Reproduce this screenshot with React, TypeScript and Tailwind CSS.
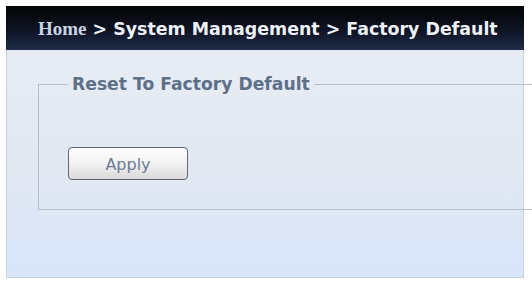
export default function App() {
  return (
    <div className="w-[532px] h-[284px] overflow-hidden bg-white pt-[6px] pl-[6px]">
      <div className="flex h-[44px] w-[518px] items-center bg-gradient-to-b from-[#050507] via-[#0d1220] to-[#1f2b4a] pl-[32px] pt-[2px] font-bold">
        <span className="text-[19px] text-[#c9d4e6] [font-family:'Liberation_Serif',serif]">Home</span>
        <span className="ml-[6px] text-[17.4px] text-[#eef1f8] [font-family:'DejaVu_Sans','Verdana',sans-serif]">
          &gt; System Management &gt; Factory Default
        </span>
      </div>
      <div className="h-[228px] w-[518px] border-x border-b border-[#c9d0da] bg-gradient-to-b from-[#e7ecf4] via-[#e2e8f2] to-[#d8e5fb] pt-[24px]">
        <fieldset className="ml-[31px] w-[500px] border border-[#b7bfca] pl-[29px] pt-[53px] pb-[29px]">
          <legend className="px-[4px] text-[17.2px] font-bold leading-[20px] text-[#5d7089] [font-family:'DejaVu_Sans','Verdana',sans-serif]">
            Reset To Factory Default
          </legend>
          <button className="flex h-[33px] w-[120px] items-center justify-center rounded-[4px] border border-[#5f6672] bg-gradient-to-b from-[#ffffff] via-[#f2f2f2] to-[#d9d9d9] pt-[2px] text-[16px] text-[#6d7b95] [font-family:'DejaVu_Sans','Verdana',sans-serif]">
            Apply
          </button>
        </fieldset>
      </div>
    </div>
  );
}
